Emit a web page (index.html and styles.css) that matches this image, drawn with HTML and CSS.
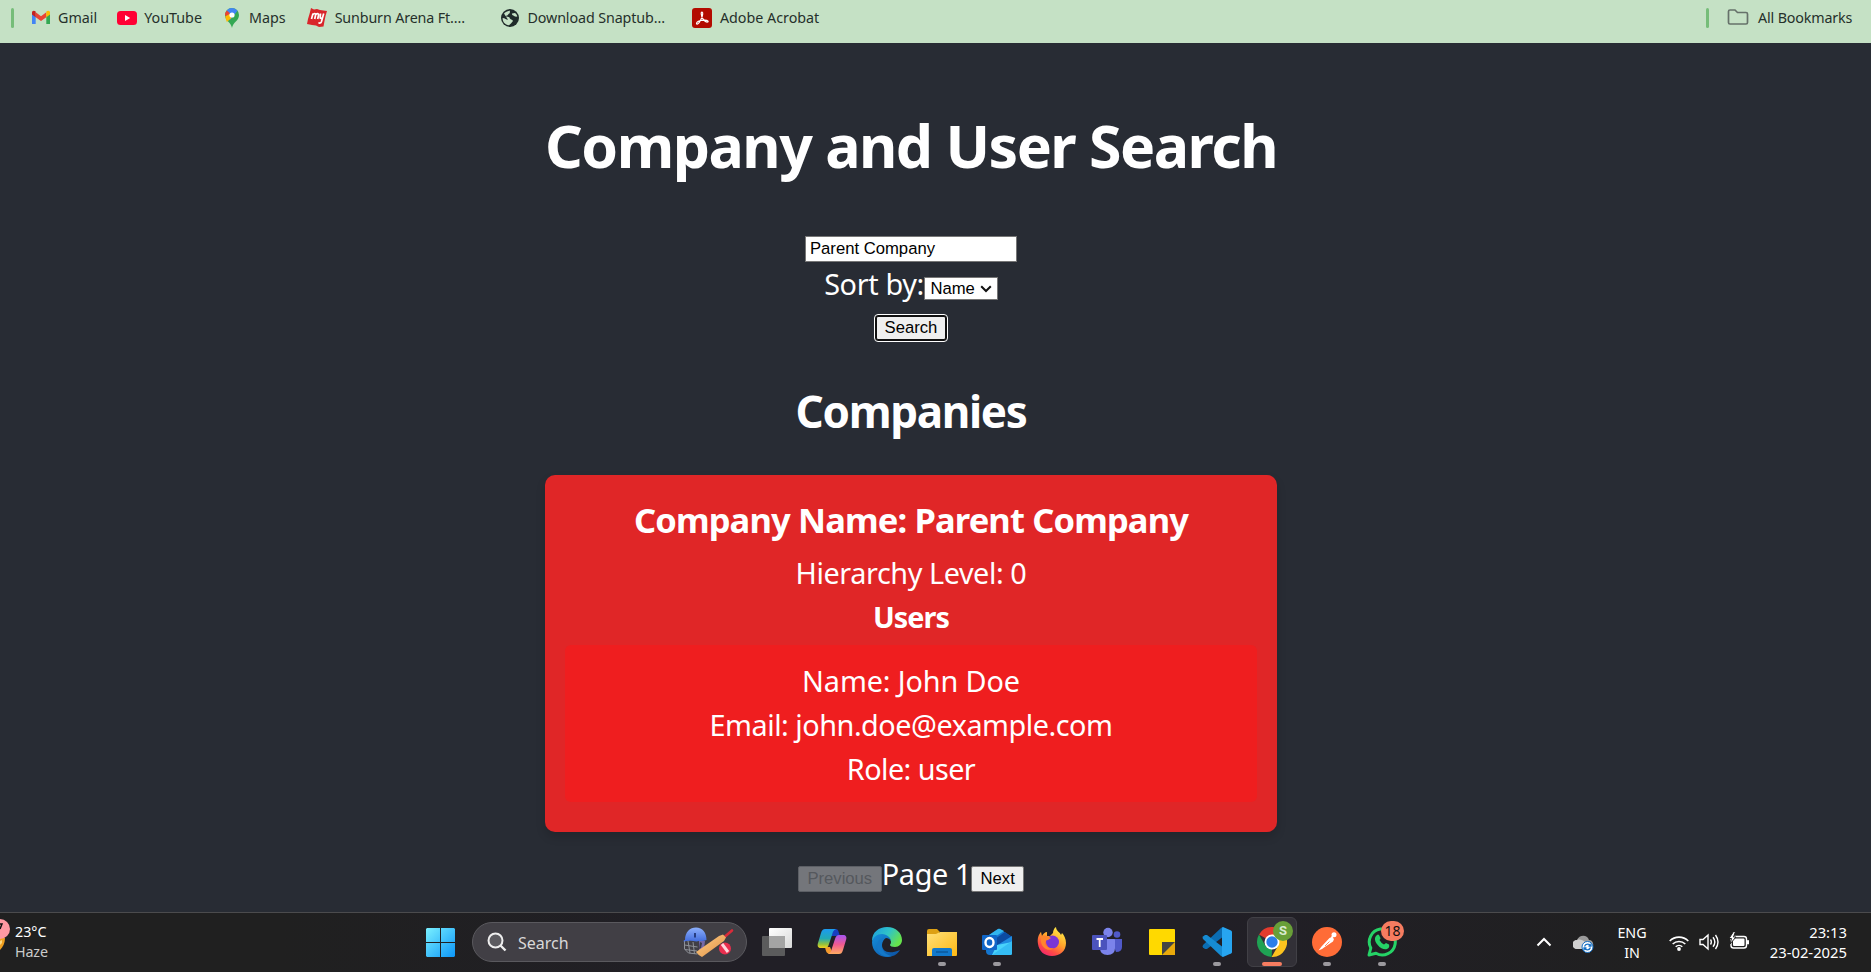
FILE: index.html
```html
<!DOCTYPE html>
<html lang="en">
<head>
<meta charset="utf-8">
<title>Company and User Search</title>
<link rel="stylesheet" href="styles.css">
</head>
<body>
<nav class="bookmarks">
  <span class="divider"></span>
  <a class="bm bm-gmail"><svg width="20" height="20" viewBox="0 0 20 20"><path d="M1 4.500V16h3.700V8z" fill="#4285f4"/><path d="M19 4.500V16h-3.700V8z" fill="#34a853"/><path d="M4.700 4.200v5L10 13l5.300-3.800v-5L10 8.200z" fill="#ea4335"/><path d="M1 4.600C1 2.600 3 2 4.700 3.600v5.600L1 6.500z" fill="#c5221f"/><path d="M19 4.600c0-2-2-2.600-3.700-1v5.600L19 6.500z" fill="#fbbc04"/></svg><span class="t t-gmail">Gmail</span></a>
  <a class="bm bm-yt"><svg width="20" height="20" viewBox="0 0 20 20"><rect y="3" width="20" height="14" rx="3.500" fill="#ff0033"/><path d="M8 7l5.200 3L8 13z" fill="#fff"/></svg><span class="t t-yt">YouTube</span></a>
  <a class="bm bm-maps"><svg width="20" height="20" viewBox="0 0 20 20"><path d="M3 7a7 7 0 0 1 14 0c0 6-6 7-7 13C9 14 3 13 3 7z" fill="#34a853"/><path d="M4.700 2.500A7 7 0 0 1 15.500 2.700L8 12z" fill="#4285f4"/><path d="M4.800 2.400L8 5.200 5 9 3 7a7 7 0 0 1 1.800-4.600z" fill="#ea4335"/><path d="M3.200 8.500L7.500 6l2 4-4.700 4z" fill="#fbbc04"/><circle cx="10" cy="7" r="2.600" fill="#fff"/></svg><span class="t t-maps">Maps</span></a>
  <a class="bm bm-sun"><svg width="20" height="20" viewBox="0 0 20 20"><path d="M4 0l3 1.500L10 1l3 1 7 1-1.500 5-1 5-1 5.500-4.500.5-3-1.500-4-.5-5-1L1 11l1.500-5z" fill="#d9252a"/><path d="M4.500 11L6 5.500M6 6.500c2-2 3-.5 2.500 1L7.700 11M8.700 6.700c2-2 3.300-.8 2.800.8l-.8 3.500M13.500 5.500l-.3 4.500c.8 1 2 .3 2.500-.8M16.700 5.500l-2.200 8c-.6 1.800-2 2-3 1" fill="none" stroke="#fff" stroke-width="1.700"/></svg><span class="t t-sun">Sunburn Arena Ft....</span></a>
  <a class="bm bm-snap"><svg width="20" height="20" viewBox="0 0 20 20"><circle cx="10" cy="10" r="9" fill="#202b2a"/><path d="M4 5.500C6 3.500 8 2.800 10 2.700c-.5 2 .5 2.300-1.500 3.300-.7 2-2 1.500-3 2.200 1 .6 3 .3 4 1.300.5 2.500 3 1.500 3.500 3.500-1 1.500-2.500 3-4 4.200C5 17 2.500 13.500 2.600 10c2.500.3 3.400 1.500 5.400 1.700M15 5l-3 .5c-.5 2 1.500 1.500 2 2.500 1 .8 2.400.7 3.300.6C17 7 16.300 6 15 5z" fill="#c5e1c5"/></svg><span class="t t-snap">Download Snaptub...</span></a>
  <a class="bm bm-acro"><svg width="20" height="20" viewBox="0 0 20 20"><rect width="20" height="20" rx="3" fill="#b30b00"/><path d="M4.500 15.500c0-1.500 3.500-3 8-3.300 4 0 4.500 2 2.500 1.900-2.500-.2-5.500-4-5.800-8.400 0-2.500 1.700-2 1.500.2-.3 3.500-3.600 10-5.400 10.200-.5 0-.8-.2-.8-.6z" fill="none" stroke="#fff" stroke-width="1.200"/></svg><span class="t t-acro">Adobe Acrobat</span></a>
  <span class="divider all-div"></span>
  <a class="bm bm-all"><svg width="22" height="18" viewBox="0 0 22 18"><path d="M1.500 3.500a1.500 1.500 0 0 1 1.500-1.500h5l2.500 2.500H19a1.500 1.500 0 0 1 1.500 1.500v8.500A1.500 1.500 0 0 1 19 16H3a1.500 1.500 0 0 1-1.500-1.500z" fill="none" stroke="#66716a" stroke-width="1.700"/></svg><span class="t t-all">All Bookmarks</span></a>
</nav>

<main class="app">
  <h1><span class="t t-h1">Company and User Search</span></h1>
  <input class="query" type="text" value="Parent Company">
  <div class="sort"><span class="t t-sort">Sort by:</span><span class="select">Name<svg width="12" height="8" viewBox="0 0 12 8"><path d="M1.200 1.200L6 6l4.800-4.800" fill="none" stroke="#111" stroke-width="2"/></svg></span></div>
  <button class="btn search">Search</button>
  <h2><span class="t t-h2">Companies</span></h2>
  <section class="card">
    <h3><span class="t t-h3">Company Name: Parent Company</span></h3>
    <p><span class="t t-hier">Hierarchy Level: 0</span></p>
    <h4><span class="t t-users">Users</span></h4>
    <div class="user">
      <p><span class="t t-name">Name: John Doe</span></p>
      <p><span class="t t-email">Email: john.doe@example.com</span></p>
      <p><span class="t t-role">Role: user</span></p>
    </div>
  </section>
  <div class="pager"><button class="btn prev" disabled>Previous</button><span class="t t-page">Page 1</span><button class="btn next">Next</button></div>
</main>

<footer class="taskbar">
  <div class="weather">
    <svg width="11" height="34" viewBox="0 0 11 34"><path d="M0 19h5c0 5-2 9-5 12z" fill="#f0a020"/><path d="M0 22l2-1v3l-2 2z" fill="#ffd980"/><circle cx="0" cy="10" r="10" fill="#ff98a2"/><path d="M0 5h2L0 10" fill="none" stroke="#111" stroke-width="1.500"/></svg>
    <div class="two"><span class="t t-deg">23°C</span><span class="t t-haze">Haze</span></div>
  </div>
  <div class="start"><svg width="29" height="29" viewBox="0 0 29 29"><defs><linearGradient id="win" x1="0" y1="0" x2="1" y2="1"><stop offset="0" stop-color="#7af0ff"/><stop offset="1" stop-color="#0c96f8"/></linearGradient></defs><path d="M1 0h13v14H0V1zM15 0h13l1 1v13H15zM0 15h14v14H1l-1-1zM15 15h14v13l-1 1H15z" fill="url(#win)"/></svg></div>
  <div class="searchbox">
    <svg width="20" height="20" viewBox="0 0 20 20"><circle cx="8.500" cy="8.500" r="7" fill="#5c5b60" stroke="#eee" stroke-width="2"/><path d="M13.500 13.500l5 5" stroke="#eee" stroke-width="2.400"/></svg>
    <span class="t t-search">Search</span>
    <svg class="cricket" width="52" height="32" viewBox="0 0 52 32"><defs><linearGradient id="wood" x1="0" y1="0" x2="1" y2="1"><stop offset="0" stop-color="#ffd08a"/><stop offset="1" stop-color="#e08f42"/></linearGradient><linearGradient id="dome" x1="0" y1="0" x2="0" y2="1"><stop offset="0" stop-color="#8db0fc"/><stop offset="1" stop-color="#426cdc"/></linearGradient></defs><path d="M1.500 15v8l4 4 9 1M1.500 19l13 2M2 23.500l12 1.500M5 15l2 12M10 16l1.500 12" fill="none" stroke="#8f9298" stroke-width="1"/><path d="M16 14l6 1-1 8-5 3z" fill="#7569a8"/><path d="M17 16l2 1-1 5-2 1z" fill="#3c3a48"/><path d="M2 14C2 6 7 1.500 13 1.500c6.500 0 10.500 5 10.500 12.500-3 1.500-7 .5-10 1.500-4-1-8-1-13 0 0-1 .5-1.500 1.500-1.500z" fill="url(#dome)"/><path d="M12 7v4.500" stroke="#182a66" stroke-width="1.600"/><path d="M42 10.500l7-6" stroke="#d92b3a" stroke-width="2.600" stroke-linecap="round"/><path d="M13 26L36 10l4-1.500 3 3L41 15 19 31q-3-1-6-5z" fill="url(#wood)"/><circle cx="42" cy="22.500" r="6" fill="#e92e4e"/><path d="M39 18l6 8" stroke="#ffd5dc" stroke-width="3"/></svg>
  </div>
  <div class="apps">
    <div class="app-cell"><svg width="30" height="30" viewBox="0 0 30 30"><defs><linearGradient id="tv" x1="0" y1="0" x2="1" y2="1"><stop offset="0" stop-color="#fff"/><stop offset="1" stop-color="#d8d8d8"/></linearGradient></defs><rect x="7" y="1" width="23" height="20" rx="1" fill="url(#tv)"/><rect x="0" y="9" width="23" height="20" rx="1" fill="#5b5b5c"/><rect x="7" y="9" width="16" height="12" fill="#a4a4a4"/></svg></div>
    <div class="app-cell"><svg width="30" height="30" viewBox="0 0 30 30"><defs><linearGradient id="cp1" x1="0" y1="0" x2="0" y2="1"><stop offset="0" stop-color="#1c9af0"/><stop offset=".5" stop-color="#22aab5"/><stop offset=".8" stop-color="#93c23d"/><stop offset="1" stop-color="#f5d21c"/></linearGradient><linearGradient id="cp2" x1="0" y1="0" x2="0" y2="1"><stop offset="0" stop-color="#a554f2"/><stop offset=".5" stop-color="#f05a90"/><stop offset="1" stop-color="#ffab62"/></linearGradient></defs><path d="M17 2h1c3 0 3 1 4 4l1 3h-6l-4 0 1-5z" fill="#173fc0"/><path d="M8 20l5 0 3 7h-3c-3 0-4-2-5-7z" fill="#f59a2c"/><path d="M8 2h11c-2 1-3 2-4 6l-3 9c-1 3-2 4-4 4H4c-3 0-4-2-3-5L4 6c1-3 2-4 4-4z" fill="url(#cp1)"/><path d="M22 27H11c2-1 3-2 4-6l3-9c1-3 2-4 4-4h4c3 0 4 2 3 5l-3 10c-1 3-2 4-4 4z" fill="url(#cp2)"/></svg></div>
    <div class="app-cell"><svg width="30" height="30" viewBox="0 0 30 30"><defs><linearGradient id="ed1" x1="0" y1="0" x2="1" y2=".5"><stop offset="0" stop-color="#1a9be0"/><stop offset=".55" stop-color="#30c3c8"/><stop offset="1" stop-color="#66e24c"/></linearGradient><linearGradient id="ed2" x1="0" y1="0" x2="1" y2="1"><stop offset="0" stop-color="#1590dd"/><stop offset="1" stop-color="#0c4ea0"/></linearGradient></defs><path d="M0 14C0 5 7 0 15 0c9 0 15 6 15 13 0 4-3 7-7 7-3 0-5-1-5-2 0-1 1-1 1-3 0-3-3-5-6-5C7 10 2 12 0 14z" fill="url(#ed1)"/><path d="M0 15c1-5 5-8 10-8 5 0 9 4 9 7-1-2-3-3-5-3-2 1-4 4-4 7 0 6 6 10 18 5-3 5-8 7-13 7C7 30 0 24 0 15z" fill="url(#ed2)"/><path d="M10 16c-2 6 3 12 10 13-9 3-16-4-15-11 1-4 3-7 8-7-2 1-3 3-3 5z" fill="#1478c8"/></svg></div>
    <div class="app-cell open"><svg width="30" height="30" viewBox="0 0 30 30"><defs><linearGradient id="fo" x1="0" y1="0" x2="1" y2="1"><stop offset="0" stop-color="#ffe07a"/><stop offset="1" stop-color="#fdb813"/></linearGradient></defs><path d="M0 4q0-2 2-2h8l3 3h-1v5H0z" fill="#dda014"/><path d="M0 7h9l4-2h17v23q0 1-1 1H0z" fill="url(#fo)"/><path d="M5 29v-6q0-2 2-2h16q2 0 2 2v6z" fill="#1279cb"/><path d="M9 25h12" stroke="#09508f" stroke-width="1.200"/></svg></div>
    <div class="app-cell open"><svg width="30" height="30" viewBox="0 0 30 30"><path d="M4 10L16 2q1-.5 2 0l12 8v16q0 2-2 2H8q-4 0-4-4z" fill="#1475cf"/><path d="M4 10L16 2q1-.5 2 0l4 2L8 13z" fill="#31b5ee"/><path d="M10 14L23 5l7 5-14 9z" fill="#0c4ba2"/><path d="M14 19L30 9v6L20 21z" fill="#1f8be0"/><path d="M15 18l15-3v11q0 2-2 2H10z" fill="#49d3fb"/><path d="M30 14L10 28h18q2 0 2-2z" fill="#35bdf4"/><rect x="0" y="8" width="15" height="15" rx="1" fill="#1066c8"/><ellipse cx="7.500" cy="15.500" rx="4" ry="4.500" fill="none" stroke="#fff" stroke-width="2.400"/></svg></div>
    <div class="app-cell"><svg width="30" height="30" viewBox="0 0 30 30"><defs><linearGradient id="ff" x1=".8" y1="0" x2=".2" y2="1"><stop offset="0" stop-color="#fff34a"/><stop offset=".45" stop-color="#ffa22a"/><stop offset=".75" stop-color="#ff4b45"/><stop offset="1" stop-color="#f01f75"/></linearGradient></defs><path d="M1 17C0 11 2 7 4 5l1 4c1-2 3-4 5-4v4h3l3-3c0-2 1-5 3-6 0 4 4 5 5 8l1-2c2 2 4 6 4 10 0 8-6 13-14 13S2 24 1 17z" fill="url(#ff)"/><circle cx="15.500" cy="15" r="6.500" fill="#7a35d5"/><path d="M4 9c3-1 7-1 10 2l-3 2c-2 0-3 1-3 3 1 4 5 6 9 5-6 5-13-1-13-7z" fill="#ff852d"/></svg></div>
    <div class="app-cell"><svg width="30" height="30" viewBox="0 0 30 30"><circle cx="25" cy="7.500" r="3.300" fill="#5059c9"/><path d="M19 12h11v8q0 5-6 5z" fill="#5059c9"/><circle cx="16" cy="5.500" r="4.700" fill="#7b83eb"/><path d="M8 12h14q1 0 1 1v8q0 7-7.500 7T8 21z" fill="#7b83eb"/><rect y="8" width="15" height="15" rx="1" fill="#4b53bc"/><path d="M4.500 12h6.500M7.700 12v8" stroke="#fff" stroke-width="1.800"/></svg></div>
    <div class="app-cell"><svg width="30" height="30" viewBox="0 0 30 30"><rect x="2" y="2" width="26" height="26" rx="1" fill="#ffd900"/><path d="M15 28l13-13v13z" fill="#e9a90b"/><path d="M15 15h13L15 28z" fill="#444"/></svg></div>
    <div class="app-cell open"><svg width="30" height="30" viewBox="0 0 30 30"><path d="M21 0l-2 1L1 18q-1 1.500 0 2.500l2 1.500h2L22 9z" fill="#0b6db3"/><path d="M21 30l-2-1L1 12q-1-1.500 0-2.500L3 8h2l17 13z" fill="#168bd2"/><path d="M21 0l8 3.500q1 .5 1 1.500v20q0 1-1 1.500L21 30q-1 0-1-2V2q0-2 1-2z" fill="#27a5f0"/></svg></div>
    <div class="app-cell open active"><svg width="30" height="30" viewBox="0 0 30 30"><path d="M15 15L2 7.500A15 15 0 0 1 28 7.500z" fill="#e33b2e"/><path d="M2 7.500L8.500 19 15 22.500 14.600 30A15 15 0 0 1 2 7.500z" fill="#1fa253"/><path d="M14.600 30l6.600-11.500V15L15 7.500h13A15 15 0 0 1 14.600 30z" fill="#fcc31e"/><circle cx="15" cy="15" r="7.500" fill="#fff"/><circle cx="15" cy="15" r="5.700" fill="#2b7de9"/></svg><span class="badge profile">S</span></div>
    <div class="app-cell open"><svg width="30" height="30" viewBox="0 0 30 30"><circle cx="15" cy="15" r="15" fill="#ff6c37"/><path d="M6.500 23.500l3-4L17.500 11l2.500-1 2 2-1 2.500-7.500 5-3.500 2.500z" fill="#fff"/><path d="M13 19l4.500-4.500" stroke="#ff6c37" stroke-width=".8"/><circle cx="22" cy="7.800" r="2.500" fill="#fff"/><path d="M19.500 11l1.500-2" stroke="#fff" stroke-width="2"/></svg></div>
    <div class="app-cell open"><svg width="30" height="30" viewBox="0 0 30 30"><path d="M2 28l1.800-7A13 13 0 1 1 9 26.300z" fill="none" stroke="#25d366" stroke-width="3" stroke-linejoin="round"/><path d="M10 8q1-1 2 0l1.500 3q0 1-1 2 1.500 3 4.500 4.500l2-1.500 3 1.500q1 3-2 4.500c-5 2-13-6-12-11q.500-2 2-3z" fill="#25d366"/></svg><span class="badge count">18</span></div>
  </div>
  <div class="tray">
    <svg class="chev" width="16" height="10" viewBox="0 0 16 10"><path d="M1.500 8.500L8 2l6.500 6.500" fill="none" stroke="#fff" stroke-width="2"/></svg>
    <svg class="cloud" width="21" height="18" viewBox="0 0 21 18"><path d="M4 14a4.500 4.500 0 0 1 0-9C6 0 14-1 16 5c3 0 5 3 4 6l-4 3z" fill="#9a9a9a"/><path d="M4 14a4.500 4.500 0 0 1 0-9c3-1 6 0 8 2l6 4-3 3z" fill="#d0d0d0"/><circle cx="14.500" cy="12" r="5.500" fill="#fff" stroke="#1670c5" stroke-width="1"/><path d="M11.500 11.500c1-3 5-3 6-.5M17.500 12.500c-1 3-5 3-6 .5M18 8.500v2.500h-2.500M11 15.500v-2.500h2.500" fill="none" stroke="#1670c5" stroke-width="1.300"/></svg>
    <div class="two lang"><span class="t t-eng">ENG</span><span class="t t-in">IN</span></div>
    <svg class="wifi" width="20" height="16" viewBox="0 0 20 16"><path d="M.7 6a13.200 13.200 0 0 1 18.600 0M3.700 9a9 9 0 0 1 12.600 0M6.700 11.800a4.700 4.700 0 0 1 6.600 0" fill="none" stroke="#fff" stroke-width="1.600"/><circle cx="10" cy="14" r="1.900" fill="#fff"/></svg>
    <svg class="vol" width="20" height="18" viewBox="0 0 20 18"><path d="M1 6.500h3L9 2v14l-5-4.500H1z" fill="none" stroke="#fff" stroke-width="1.400"/><path d="M11.500 6.500q1.700 2.500 0 5M14 4.200q3.700 4.800 0 9.600M16.500 2q5 7 0 14" fill="none" stroke="#fff" stroke-width="1.400"/></svg>
    <svg class="battery" width="21" height="18" viewBox="0 0 21 18"><rect x="2" y="4.500" width="15.500" height="11.500" rx="2.500" fill="none" stroke="#fff" stroke-width="1.400"/><path d="M18.500 8.500h1v3.500h-1z" fill="#fff" stroke="#fff"/><rect x="4" y="6.500" width="11.500" height="7.500" rx="1" fill="#fff"/><path d="M4.500-.5L0 6.500h2.500l-1.500 5.500 6-7H4.500L6.500-.5z" fill="#fff" stroke="#202020" stroke-width="1"/></svg>
    <div class="two clock"><span class="t t-time">23:13</span><span class="t t-date">23-02-2025</span></div>
  </div>
</footer>
</body>
</html>
```
FILE: styles.css
```css
* { box-sizing: border-box; }
body { margin: 0; width: 1871px; height: 972px; overflow: hidden; background: #282c34; color: #fff; font-family: "Noto Sans", "Open Sans", sans-serif; display: flex; flex-direction: column; }
h1, h2, h3, h4, p { margin: 0; }
svg { display: block; flex: none; }
.t { white-space: pre; }

.bookmarks { flex: none; height: 43px; background: #c5e1c5; color: #25302b; display: flex; align-items: flex-start; padding: 8px 17px 0 11px; font-size: 14.300px; line-height: 20px; }
.divider { width: 3px; height: 20px; border-radius: 2px; background: #76bd79; }
.bm { display: flex; gap: 7px; }
.bm-gmail { margin-left: 17px; }
.bm-yt { margin-left: 20px; }
.bm-maps { margin-left: 20px; }
.bm-sun { margin-left: 21px; gap: 8px; }
.t-sun { letter-spacing: -0.130px; }
.bm-snap { margin-left: 35.500px; }
.t-snap { letter-spacing: -0.110px; }
.bm-acro { margin-left: 27px; gap: 8px; }
.all-div { margin-left: auto; }
.bm-all { margin-left: 18px; gap: 9px; width: 127px; }
.t-all { letter-spacing: -0.150px; }

.app { flex: none; height: 869px; padding: 58px 49px 0 0; display: flex; flex-direction: column; align-items: center; font-size: 28.800px; line-height: 44px; }
h1 { font-size: 59px; line-height: 88px; letter-spacing: -1.510px; }
.query { margin-top: 47px; width: 212px; height: 26px; border: 1px solid #767676; padding: 1px 4px; background: #fff; color: #000; font: 16.670px "Liberation Sans", Arial, sans-serif; outline: none; }
.sort { display: flex; height: 44px; }
.t-sort { letter-spacing: -0.350px; }
.select { width: 74px; height: 23px; margin-top: 15px; border: 1px solid #767676; background: #fff; color: #000; display: flex; align-items: center; gap: 5px; padding-left: 5.500px; font: 16.670px "Liberation Sans", Arial, sans-serif; }
.btn { font: 16.670px "Liberation Sans", Arial, sans-serif; height: 26px; padding: 0; border: 1px solid #767676; border-radius: 2px; background: #efefef; color: #000; }
.search { width: 70px; height: 24px; margin-top: 10px; border: 1px solid #101010; outline: 1px solid #fff; outline-offset: 1px; box-shadow: 0 0 0 1px #101010; }
h2 { margin-top: 38px; font-size: 44px; line-height: 66px; letter-spacing: -1.350px; }
.card { width: 732px; height: 357px; margin-top: 31px; padding: 18px 20px 0; border-radius: 10px; background: #e02627; box-shadow: 0 5px 10px rgba(0,0,0,.15); text-align: center; }
h3 { font-size: 34.500px; line-height: 53px; margin-bottom: 5px; letter-spacing: -0.860px; }
h4 { font-size: 28.800px; line-height: 44px; letter-spacing: -0.900px; }
.t-hier { letter-spacing: -0.420px; }
.user { margin-top: 6px; height: 157px; padding-top: 14px; border-radius: 6px; background: #ef1e1f; }
.t-name { letter-spacing: -0.120px; }
.t-email { letter-spacing: -0.480px; }
.t-role { letter-spacing: -0.550px; }
.pager { display: flex; margin-top: 20px; }
.t-page { letter-spacing: -0.350px; }
.pager .btn { margin-top: 14px; }
.prev { width: 84px; color: #55585d; background: #74767b; border-color: #5c5f65; }
.next { width: 53px; }

.taskbar { flex: none; height: 60px; background: linear-gradient(90deg, #202020 15%, #211f26 40%, #211f26 65%, #202020 90%); border-top: 1px solid #4b4b4d; display: flex; font-size: 14.300px; line-height: 20px; }
.weather { width: 426px; display: flex; gap: 4px; padding-top: 6px; }
.two { display: flex; flex-direction: column; padding-top: 3px; }
.t-haze { color: #cbcbcb; letter-spacing: -0.150px; }
.start { width: 46px; padding-top: 15px; }
.searchbox { width: 275px; height: 40px; margin-top: 9px; border: 1px solid #5a595e; border-radius: 20px; background: #413f45; display: flex; align-items: center; padding-left: 14px; color: #d8d8d8; font-size: 16px; }
.t-search { margin: 1px 0 0 11px; }
.cricket { margin-left: auto; margin-right: 11px; }
.apps { display: flex; margin-left: 2px; }
.app-cell { position: relative; width: 50px; height: 50px; margin: 4px 5px 0 0; border-radius: 6px; padding: 10px; }
.apps .app-cell:first-child { margin-left: 3px; }
.open::after { content: ""; position: absolute; left: 21px; top: 45px; width: 8px; height: 4px; border-radius: 2px; background: #9b999e; }
.active { background: #323037; border: 1px solid #414046; padding: 9px; }
.active::after { left: 14px; top: 44px; width: 20px; background: #f67c60; }
.badge { position: absolute; border-radius: 50%; text-align: center; }
.profile { left: 25px; top: 3px; width: 20px; height: 20px; background: #689f38; color: #d9ead0; font: bold 13px/20px Roboto, sans-serif; }
.count { left: 24px; top: 4px; width: 23px; height: 20px; border-radius: 10px; background: #f67c60; color: #111; font-size: 14px; line-height: 20px; }
.tray { margin-left: auto; padding-right: 24px; display: flex; }
.chev { margin: 24px 21px 0 0; }
.cloud { margin: 22px 23px 0 0; }
.lang { width: 30px; align-items: center; margin: 7px 22px 0 0; }
.wifi { margin: 22px 10px 0 0; }
.vol { margin: 20px 10px 0 0; }
.battery { margin: 19px 0 0; }
.clock { width: 97px; align-items: flex-end; margin-top: 6px; font-size: 14.800px; }
```
